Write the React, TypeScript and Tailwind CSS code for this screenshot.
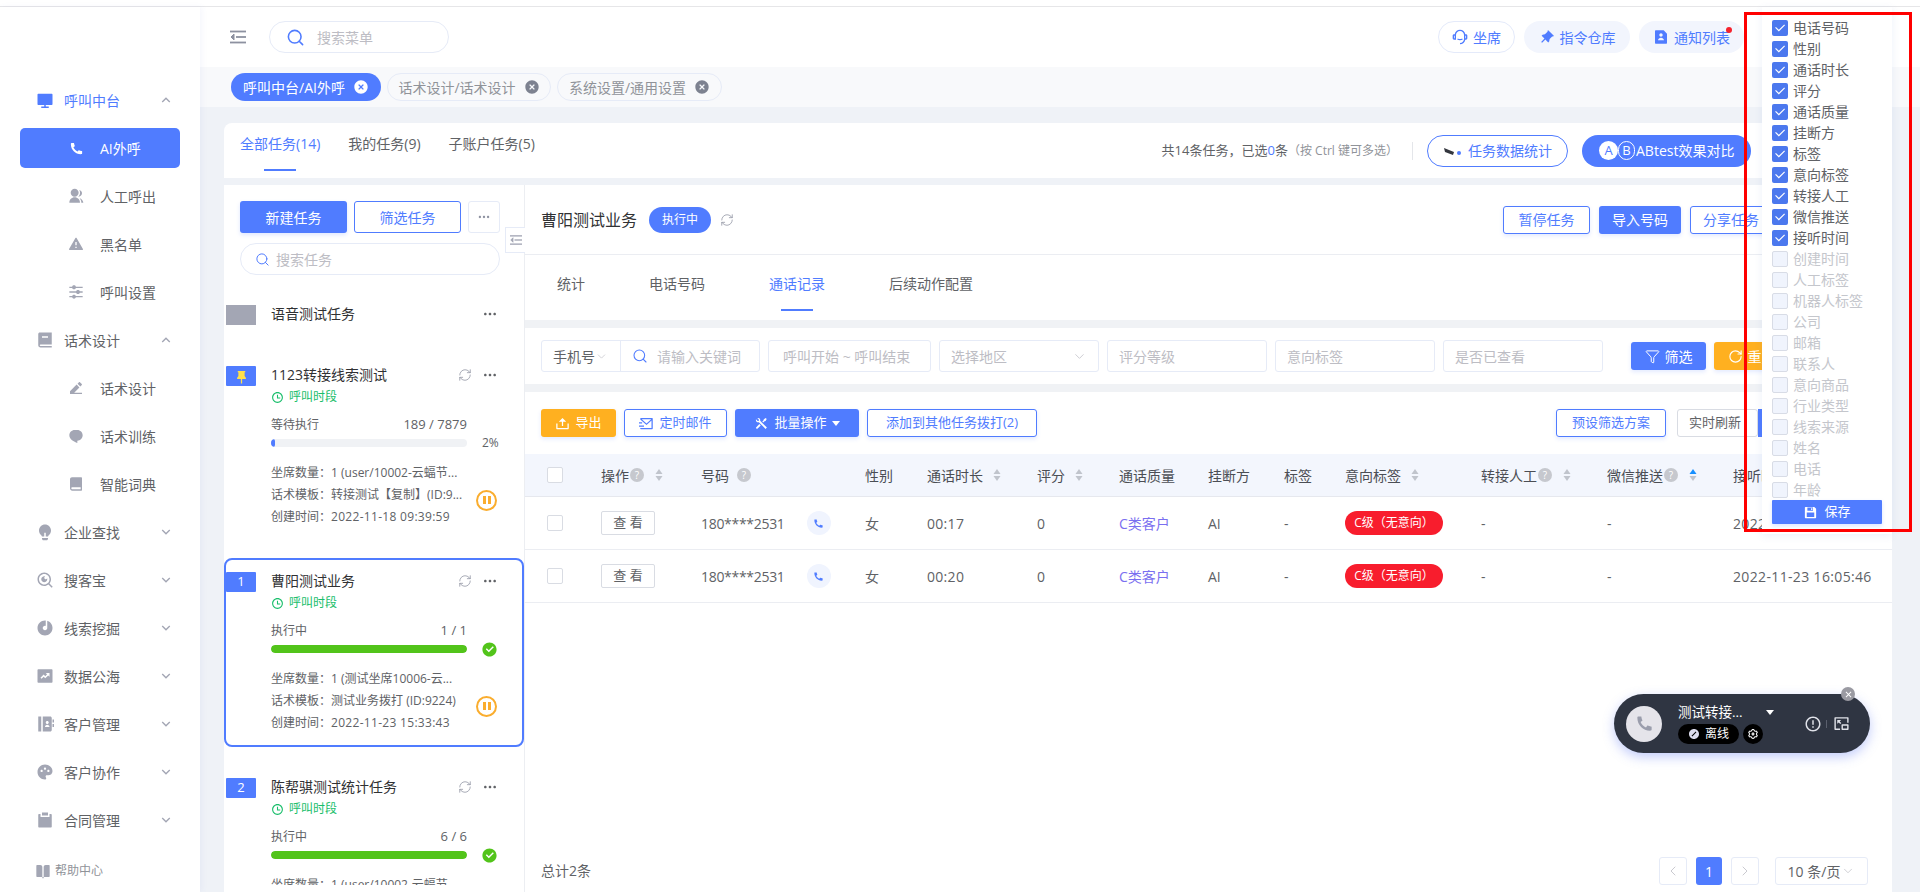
import React from "react";
import {
  RiComputerFill, RiPhoneFill, RiGroupFill, RiAlertFill, RiEqualizerFill, RiBook2Fill, RiEdit2Fill,
  RiChat1Fill, RiBookFill, RiLightbulbFill, RiSearchEyeLine, RiDiscFill, RiFundsBoxFill, RiContactsBookFill,
  RiPaletteFill, RiClipboardFill, RiBookOpenFill, RiArrowUpSLine, RiArrowDownSLine, RiCloseCircleFill,
  RiCustomerService2Line, RiPushpin2Fill, RiFileUserFill, RiMoreFill, RiTimeLine, RiCheckLine,
  RiUpload2Line, RiMailSendLine, RiToolsFill, RiSave3Fill, RiForbid2Fill, RiErrorWarningLine,
  RiPictureInPictureExitLine, RiCloseLine, RiPushpinFill, RiSettings3Line, RiCheckboxCircleFill,
} from "react-icons/ri";
import { Search, RefreshCw, ChevronDown, ChevronLeft, ChevronRight, Filter, RotateCw } from "lucide-react";

const COLON = "\uFF1A";
const COMMA = "\uFF0C";
const LP = "\uFF08";
const RP = "\uFF09";

function CollapseIcon({ className, size }: { className: string; size: number }) {
  return (
    <svg width={size} height={size} viewBox="0 0 16 16" className={className} fill="none" stroke="currentColor" strokeWidth="1.8">
      <path d="M0 2.5 H16" />
      <path d="M6 8 H16" />
      <path d="M0 13.5 H16" />
      <path d="M4 5 L1 8 L4 11 Z" fill="currentColor" strokeWidth="1" />
    </svg>
  );
}

function NavRow({ icon, label, open }: { icon: React.ReactNode; label: string; open?: boolean }) {
  return (
    <div className="h-12 flex items-center pl-[36px] pr-[26px] text-[14px] text-[#606266]">
      <span className="w-[18px] flex justify-center text-[#a3a6b4] text-[20px]">{icon}</span>
      <span className="ml-[10px] flex-1">{label}</span>
      {open ? <RiArrowUpSLine className="text-[#a3a6b4] text-[16px]" /> : <RiArrowDownSLine className="text-[#a3a6b4] text-[16px]" />}
    </div>
  );
}

function SubRow({ icon, label }: { icon: React.ReactNode; label: string }) {
  return (
    <div className="h-12 flex items-center pl-[68px] text-[14px] text-[#606266]">
      <span className="w-[16px] flex justify-center text-[#a3a6b4] text-[16px]">{icon}</span>
      <span className="ml-[16px]">{label}</span>
    </div>
  );
}

function Sidebar() {
  return (
    <aside className="w-[200px] shrink-0 bg-white pt-[69px] flex flex-col shadow-[2px_0_6px_rgba(80,110,200,0.06)] z-10">
      <div className="h-12 flex items-center pl-[36px] pr-[26px] text-[14px] text-[#507cff]">
        <span className="w-[18px] flex justify-center text-[21px]"><RiComputerFill /></span>
        <span className="ml-[10px] flex-1">呼叫中台</span>
        <RiArrowUpSLine className="text-[#a3a6b4] text-[16px]" />
      </div>
      <div className="h-12 flex items-center">
        <div className="mx-[20px] w-[160px] h-10 rounded-[5px] bg-[#507cff] text-white flex items-center pl-[49px] text-[14px]">
          <RiPhoneFill className="text-[15px]" />
          <span className="ml-[16px]">AI外呼</span>
        </div>
      </div>
      <SubRow icon={<RiGroupFill />} label="人工呼出" />
      <SubRow icon={<RiAlertFill />} label="黑名单" />
      <SubRow icon={<RiEqualizerFill />} label="呼叫设置" />
      <NavRow icon={<RiBook2Fill />} label="话术设计" open />
      <SubRow icon={<RiEdit2Fill />} label="话术设计" />
      <SubRow icon={<RiChat1Fill />} label="话术训练" />
      <SubRow icon={<RiBookFill />} label="智能词典" />
      <NavRow icon={<RiLightbulbFill />} label="企业查找" />
      <NavRow icon={<RiSearchEyeLine />} label="搜客宝" />
      <NavRow icon={<RiDiscFill />} label="线索挖掘" />
      <NavRow icon={<RiFundsBoxFill />} label="数据公海" />
      <NavRow icon={<RiContactsBookFill />} label="客户管理" />
      <NavRow icon={<RiPaletteFill />} label="客户协作" />
      <NavRow icon={<RiClipboardFill />} label="合同管理" />
      <div className="mt-[18px] flex items-center pl-[35px] text-[12px] text-[#909399]">
        <RiBookOpenFill className="text-[#a3a6b4] text-[16px]" />
        <span className="ml-[4px]">帮助中心</span>
      </div>
    </aside>
  );
}

function HeaderPill({ icon, label, outlined, dot, w }: { icon: React.ReactNode; label: string; outlined?: boolean; dot?: boolean; w: string }) {
  return (
    <div className={`relative h-8 rounded-full flex items-center justify-center gap-[5px] text-[14px] text-[#507cff] ${w} ${outlined ? "border border-[#e4eafa] bg-white" : "bg-[#f2f5fd]"}`}>
      <span className="text-[16px]">{icon}</span>
      <span>{label}</span>
      {dot && <span className="absolute right-[12px] top-[6px] w-[6px] h-[6px] rounded-full bg-[#f5222d]" />}
    </div>
  );
}

function Header() {
  return (
    <header className="h-[60px] bg-white flex items-center pl-[30px] pr-[176px] shrink-0">
      <CollapseIcon size={16} className="text-[#8d91a0]" />
      <div className="ml-[23px] w-[180px] h-8 rounded-full border border-[#e6ebf7] flex items-center pl-[16px] text-[14px] text-[#bdbdc4]">
        <Search className="w-[19px] h-[19px] text-[#507cff]" strokeWidth={2} />
        <span className="ml-[12px]">搜索菜单</span>
      </div>
      <div className="ml-auto flex gap-[9px]">
        <HeaderPill outlined icon={<RiCustomerService2Line />} label="坐席" w="w-[77px]" />
        <HeaderPill icon={<RiPushpinFill />} label="指令仓库" w="w-[106px]" />
        <HeaderPill dot icon={<RiFileUserFill />} label="通知列表" w="w-[105px]" />
      </div>
    </header>
  );
}

function ChipTab({ label, active, w }: { label: string; active?: boolean; w: string }) {
  return (
    <div className={`h-7 rounded-full flex items-center justify-center gap-[8px] text-[14px] ${w} ${active ? "bg-[#507cff] text-white" : "border border-[#e6ebf7] text-[#909399]"}`}>
      <span>{label}</span>
      <RiCloseCircleFill className={`text-[16px] ${active ? "text-white" : "text-[#7d8290]"}`} />
    </div>
  );
}

function SmallBtn({ children, kind, w, h = "h-7" }: { children: React.ReactNode; kind: "fill" | "line" | "orange"; w: string; h?: string }) {
  const k = kind === "fill" ? "bg-[#507cff] text-white" : kind === "orange" ? "bg-[#ffb020] text-white" : "bg-white border border-[#507cff] text-[#507cff]";
  return (
    <div className={`${h} ${w} shrink-0 rounded-[3px] text-[13px] flex items-center justify-center gap-[5px] shadow-[0_2px_4px_rgba(80,124,255,0.16)] ${k}`}>
      {children}
    </div>
  );
}

type Task = { badge: React.ReactNode; title: string; status: string; count: string; pct: number; seats: string; tpl: string; time: string; selected?: boolean; pctLabel?: string };

function TaskCard({ t }: { t: Task }) {
  const done = t.pct === 100;
  return (
    <div className={`h-[189px] mb-[17px] shrink-0 border-2 rounded-[8px] pt-[12px] flex ${t.selected ? "border-[#507cff]" : "border-transparent"}`}>
      <div className="w-[30px] h-5 rounded-[1px] bg-[#507cff] text-white text-[13px] flex items-center justify-center shrink-0">{t.badge}</div>
      <div className="ml-[15px] flex-1 text-[#606266]">
        <div className="h-[18px] w-[227px] flex items-center justify-between text-[14px] leading-[18px] text-[#303133]">
          <span>{t.title}</span>
          <span className="flex items-center gap-[10px] text-[#8d91a0]">
            <RefreshCw className="w-[14px] h-[14px]" strokeWidth={1.3} />
            <RiMoreFill className="text-[16px] text-[#606266]" />
          </span>
        </div>
        <div className="mt-[2px] h-[22px] flex items-center text-[12px] text-[#19be6b]">
          <RiTimeLine className="text-[13px]" />
          <span className="ml-[5px]">呼叫时段</span>
        </div>
        <div className="mt-[7px] h-5 w-[196px] flex items-center justify-between text-[12px]">
          <span>{t.status}</span>
          <span className="text-[13px]">{t.count}</span>
        </div>
        <div className="mt-[4px] h-2 flex items-center">
          <div className="w-[196px] h-2 rounded-full bg-[#f0f2f5] overflow-hidden">
            <div className={`h-full rounded-full ${done ? "bg-[#52c41a]" : "bg-[#507cff]"}`} style={{ width: `${t.pct}%` }} />
          </div>
          {done ? (
            <RiCheckboxCircleFill className="ml-[14px] text-[#52c41a] text-[17px]" />
          ) : (
            <span className="ml-[15px] text-[12px]">{t.pctLabel}</span>
          )}
        </div>
        <div className="mt-[15px] flex items-center text-[12px]">
          <div className="w-[205px] shrink-0">
            <div className="h-[22px] leading-[22px] whitespace-nowrap">坐席数量{COLON}{t.seats}</div>
            <div className="h-[22px] leading-[22px] whitespace-nowrap">话术模板{COLON}{t.tpl}</div>
            <div className="h-[22px] leading-[22px] whitespace-nowrap">创建时间{COLON}<span className="tracking-[0.3px]">{t.time}</span></div>
          </div>
          <div className="mt-[10px] w-[21px] h-[21px] rounded-full border-2 border-[#faad2e] flex items-center justify-center gap-[2px] shrink-0">
            <span className="w-[3px] h-[8px] bg-[#faad2e]" />
            <span className="w-[3px] h-[8px] bg-[#faad2e]" />
          </div>
        </div>
      </div>
    </div>
  );
}

const tasks: Task[] = [
  { badge: <RiPushpin2Fill className="text-[#ffe04a] text-[15px]" />, title: "1123转接线索测试", status: "等待执行", count: "189 / 7879", pct: 2, pctLabel: "2%", seats: "1 (user/10002-云蝠节...", tpl: "转接测试【复制】(ID:9...", time: "2022-11-18 09:39:59" },
  { badge: "1", title: "曹阳测试业务", status: "执行中", count: "1 / 1", pct: 100, seats: "1 (测试坐席10006-云...", tpl: "测试业务拨打 (ID:9224)", time: "2022-11-23 15:33:43", selected: true },
  { badge: "2", title: "陈帮骐测试统计任务", status: "执行中", count: "6 / 6", pct: 100, seats: "1 (user/10002-云蝠节...", tpl: "测试业务拨打 (ID:9224)", time: "2022-11-23 15:33:43" },
];

function TaskPanel() {
  return (
    <section className="w-[301px] shrink-0 border-r border-[#eceef2] flex flex-col pt-[16px]">
      <div className="px-[16px] flex gap-[7px]">
        <div className="w-[107px] h-8 rounded-[3px] bg-[#507cff] text-white text-[14px] flex items-center justify-center shadow-[0_2px_4px_rgba(80,124,255,0.18)]">新建任务</div>
        <div className="w-[107px] h-8 rounded-[3px] bg-white border border-[#507cff] text-[#507cff] text-[14px] flex items-center justify-center">筛选任务</div>
        <div className="w-8 h-8 rounded-[3px] border border-[#e6ebf7] text-[#8d91a0] flex items-center justify-center"><RiMoreFill className="text-[14px]" /></div>
      </div>
      <div className="ml-[16px] mt-[10px] w-[260px] h-8 rounded-full border border-[#e6ebf7] flex items-center pl-[14px] text-[14px] text-[#bdbdc4]">
        <Search className="w-[15px] h-[15px] text-[#507cff]" strokeWidth={1.6} />
        <span className="ml-[6px]">搜索任务</span>
      </div>
      <div className="mt-[16px] h-[594px] overflow-hidden">
        <div className="h-[44px] mb-[17px] border-2 border-transparent pt-[12px] flex">
          <div className="w-[30px] h-5 bg-[#a3a6b4] shrink-0" />
          <div className="ml-[15px] w-[227px] h-[18px] flex items-center justify-between text-[14px] leading-[18px] text-[#303133]">
            <span>语音测试任务</span>
            <RiMoreFill className="text-[16px] text-[#606266]" />
          </div>
        </div>
        {tasks.map((t) => <TaskCard key={t.title} t={t} />)}
      </div>
    </section>
  );
}

function Field({ label, w, arrow }: { label: string; w: string; arrow?: boolean }) {
  return (
    <div className={`${w} h-8 shrink-0 rounded-[3px] border border-[#e6ebf7] flex items-center justify-between px-[11px] text-[14px] text-[#bdbdc4]`}>
      <span>{label}</span>
      {arrow && <ChevronDown className="w-[15px] h-[15px]" strokeWidth={1.2} />}
    </div>
  );
}

function Help() {
  return <span className="block w-[14px] h-[14px] rounded-full bg-[#c6c8ce] text-white text-[10px] leading-[14px] text-center shrink-0">?</span>;
}

function Sort({ on }: { on?: boolean }) {
  return (
    <svg width="8" height="14" viewBox="0 0 8 14" className="shrink-0">
      <path d="M4 1 L7.5 6 L.5 6 Z" fill={on ? "#1890ff" : "#c0c4cc"} />
      <path d="M4 13 L7.5 8 L.5 8 Z" fill="#c0c4cc" />
    </svg>
  );
}

const tableCols = "grid grid-cols-[76px_100px_164px_62px_110px_82px_89px_76px_61px_136px_126px_126px_1fr] items-center";

function CheckCell() {
  return <div className="ml-[22px] w-4 h-4 rounded-[2px] border border-[#d9dce3] bg-white" />;
}

function HeadCell({ label, help, sort, on }: { label: string; help?: boolean; sort?: boolean; on?: boolean }) {
  return (
    <div className="flex items-center">
      <span className="whitespace-nowrap">{label}</span>
      {help && <span className="ml-[1px]"><Help /></span>}
      {sort && <span className={`${help ? "ml-[11px]" : "ml-[10px]"} flex`}><Sort on={on} /></span>}
    </div>
  );
}

function Row({ dur, time }: { dur: string; time: string }) {
  return (
    <div className={`${tableCols} h-[53px] border-b border-[#ebedf2] text-[14px] text-[#606266]`}>
      <CheckCell />
      <div className="w-[54px] h-6 rounded-[2px] border border-[#d9dce3] text-[13px] flex items-center justify-center">查 看</div>
      <div className="flex items-center">
        <span className="tracking-[-0.3px]">180****2531</span>
        <span className="ml-[22px] w-6 h-6 rounded-full bg-[#f0f4fe] text-[#507cff] flex items-center justify-center"><RiPhoneFill className="text-[11px]" /></span>
      </div>
      <div>女</div>
      <div className="tracking-[0.3px]">{dur}</div>
      <div>0</div>
      <div className="text-[#7a6ff0]">C类客户</div>
      <div>AI</div>
      <div>-</div>
      <div className="w-[98px] h-6 rounded-full bg-[#f81d2d] text-white text-[12px] flex items-center justify-center whitespace-nowrap">C级{LP}无意向{RP}</div>
      <div>-</div>
      <div>-</div>
      <div className="whitespace-nowrap tracking-[0.35px]">{time}</div>
    </div>
  );
}

function DetailPanel() {
  return (
    <section className="relative flex-1 min-w-0 flex flex-col">
      <div className="absolute -left-[20px] top-[42px] w-[20px] h-[26px] bg-white border border-r-0 border-[#e6ebf7] flex items-center justify-center">
        <CollapseIcon size={12} className="text-[#a3a6b4]" />
      </div>
      <div className="h-[70px] shrink-0 border-b border-[#ebedf2] flex items-center px-[16px]">
        <span className="text-[16px] text-[#303133]">曹阳测试业务</span>
        <span className="ml-[12px] w-[62px] h-[26px] rounded-full bg-[#507cff] text-white text-[12px] flex items-center justify-center">执行中</span>
        <RefreshCw className="ml-[9px] w-[14px] h-[14px] text-[#8d91a0]" strokeWidth={1.3} />
        <div className="ml-[769px] flex gap-[9px]">
          <SmallBtn kind="line" w="w-[87px]"><span className="text-[14px]">暂停任务</span></SmallBtn>
          <SmallBtn kind="fill" w="w-[82px]"><span className="text-[14px]">导入号码</span></SmallBtn>
          <SmallBtn kind="line" w="w-[82px]"><span className="text-[14px]">分享任务</span></SmallBtn>
        </div>
      </div>
      <div className="h-[65px] shrink-0 flex gap-16 pl-[32px] text-[14px] text-[#606266]">
        <div className="pt-[18px]">统计</div>
        <div className="pt-[18px]">电话号码</div>
        <div className="pt-[18px] text-[#507cff] flex flex-col items-center">
          <span>通话记录</span>
          <span className="mt-[15px] w-[32px] h-[2px] bg-[#507cff]" />
        </div>
        <div className="pt-[18px]">后续动作配置</div>
      </div>
      <div className="h-[8px] shrink-0 bg-[#f0f2f5]" />
      <div className="h-[56px] shrink-0 flex items-center pl-[16px] gap-[8px]">
        <div className="w-[219px] h-8 shrink-0 rounded-[3px] border border-[#e6ebf7] flex items-center text-[14px]">
          <div className="w-[79px] h-full border-r border-[#e6ebf7] flex items-center pl-[11px] text-[#606266]">
            <span>手机号</span>
            <ChevronDown className="w-[13px] h-[13px] text-[#bdbdc4]" strokeWidth={1.2} />
          </div>
          <Search className="ml-[11px] w-[16px] h-[16px] text-[#507cff]" strokeWidth={1.6} />
          <span className="ml-[9px] text-[#bdbdc4] whitespace-nowrap">请输入关键词</span>
        </div>
        <div className="w-[163px] h-8 shrink-0 rounded-[3px] border border-[#e6ebf7] flex items-center pl-[14px] text-[14px] text-[#bdbdc4] whitespace-nowrap">呼叫开始 ~ 呼叫结束</div>
        <Field label="选择地区" w="w-[160px]" arrow />
        <Field label="评分等级" w="w-[160px]" />
        <Field label="意向标签" w="w-[160px]" />
        <Field label="是否已查看" w="w-[160px]" />
        <div className="ml-[20px] flex gap-[8px]">
          <SmallBtn kind="fill" w="w-[75px]"><Filter className="w-[15px] h-[15px]" strokeWidth={1.6} /><span className="text-[14px]">筛选</span></SmallBtn>
          <SmallBtn kind="orange" w="w-[75px]"><RotateCw className="w-[15px] h-[15px]" strokeWidth={1.8} /><span className="text-[14px]">重置</span></SmallBtn>
        </div>
      </div>
      <div className="h-[8px] shrink-0 bg-[#f0f2f5]" />
      <div className="h-[62px] shrink-0 flex items-start pt-[17px] pl-[16px] gap-[8px]">
        <SmallBtn kind="orange" w="w-[75px]"><RiUpload2Line className="text-[15px]" /><span>导出</span></SmallBtn>
        <SmallBtn kind="line" w="w-[103px]"><RiMailSendLine className="text-[15px]" /><span>定时邮件</span></SmallBtn>
        <SmallBtn kind="fill" w="w-[124px]"><RiToolsFill className="text-[15px]" /><span>批量操作</span><span className="w-0 h-0 border-x-[4px] border-x-transparent border-t-[5px] border-t-white" /></SmallBtn>
        <SmallBtn kind="line" w="w-[170px]"><span>添加到其他任务拨打(2)</span></SmallBtn>
        <div className="ml-[511px] flex items-start">
          <SmallBtn kind="line" w="w-[110px]"><span>预设筛选方案</span></SmallBtn>
          <div className="ml-[11px] w-[81px] h-7 rounded-[3px] border border-[#d9dce3] text-[13px] text-[#606266] flex items-center pl-[11px] whitespace-nowrap">实时刷新</div>
          <div className="w-[5px] h-7 bg-[#507cff]" />
        </div>
      </div>
      <div className={`${tableCols} h-[43px] shrink-0 bg-[#f3f6fd] border-b border-[#e6e8ee] text-[14px] text-[#4b4e55]`}>
        <CheckCell />
        <HeadCell label="操作" help sort />
        <div className="flex items-center gap-[8px]"><span>号码</span><Help /></div>
        <div>性别</div>
        <HeadCell label="通话时长" sort />
        <div className="flex items-center gap-[10px]"><span>评分</span><Sort /></div>
        <div>通话质量</div>
        <div>挂断方</div>
        <div>标签</div>
        <HeadCell label="意向标签" sort />
        <HeadCell label="转接人工" help sort />
        <HeadCell label="微信推送" help sort on />
        <div>接听时间</div>
      </div>
      <Row dur="00:17" time="2022-11-23 16:06:12" />
      <Row dur="00:20" time="2022-11-23 16:05:46" />
      <div className="mt-auto h-[35px] shrink-0 flex items-start pl-[16px] pr-[24px] text-[14px] text-[#606266]">
        <span className="mt-[3px]">总计2条</span>
        <div className="ml-auto flex items-center">
          <span className="w-7 h-7 rounded-[3px] border border-[#e6ebf7] flex items-center justify-center text-[#bdbdc4]"><ChevronLeft className="w-[16px] h-[16px]" strokeWidth={1.2} /></span>
          <span className="ml-[9px] w-[26px] h-7 rounded-[3px] bg-[#507cff] text-white flex items-center justify-center">1</span>
          <span className="ml-[9px] w-7 h-7 rounded-[3px] border border-[#e6ebf7] flex items-center justify-center text-[#bdbdc4]"><ChevronRight className="w-[16px] h-[16px]" strokeWidth={1.2} /></span>
          <span className="ml-[16px] w-[93px] h-7 rounded-[3px] border border-[#e6ebf7] flex items-center justify-center gap-[1px]">10 条/页<ChevronDown className="w-[14px] h-[14px] text-[#bdbdc4]" strokeWidth={1.2} /></span>
        </div>
      </div>
    </section>
  );
}

const checked = ["电话号码", "性别", "通话时长", "评分", "通话质量", "挂断方", "标签", "意向标签", "转接人工", "微信推送", "接听时间"];
const unchecked = ["创建时间", "人工标签", "机器人标签", "公司", "邮箱", "联系人", "意向商品", "行业类型", "线索来源", "姓名", "电话", "年龄"];

function ColumnPopup() {
  return (
    <div className="absolute left-[1762px] top-[7px] w-[130px] h-[527px] bg-white shadow-[0_2px_8px_rgba(80,110,200,0.1)] pt-[10px] px-[10px] z-20">
      {checked.map((c) => (
        <div key={c} className="h-[21px] flex items-center text-[14px] text-[#606266]">
          <span className="w-4 h-4 rounded-[2px] bg-[#4b78ee] flex items-center justify-center shrink-0"><RiCheckLine className="text-white text-[14px]" /></span>
          <span className="ml-[5px] whitespace-nowrap">{c}</span>
        </div>
      ))}
      {unchecked.map((c) => (
        <div key={c} className="h-[21px] flex items-center text-[14px] text-[#c4c6cc]">
          <span className="w-4 h-4 rounded-[2px] bg-[#f0f4fd] border border-[#d8dce6] shrink-0" />
          <span className="ml-[5px] whitespace-nowrap">{c}</span>
        </div>
      ))}
      <div className="w-[110px] h-6 rounded-[1px] bg-[#507cff] text-white text-[13px] flex items-center justify-center gap-[6px] shadow-[0_2px_4px_rgba(80,124,255,0.2)]">
        <RiSave3Fill className="text-[15px]" />
        <span>保存</span>
      </div>
    </div>
  );
}

function PhoneWidget() {
  return (
    <div className="absolute left-[1614px] top-[694px] w-[256px] h-[59px] rounded-full bg-[#2f3542] shadow-[0_4px_12px_rgba(80,110,240,0.35)] flex items-center pl-[12px] z-20">
      <span className="w-9 h-9 rounded-full bg-[#e5e4ea] flex items-center justify-center text-[#9a9dac]"><RiPhoneFill className="text-[19px]" /></span>
      <div className="ml-[16px] w-[112px]">
        <div className="flex items-center justify-between pr-[16px] text-[13.5px] leading-[18px] text-white whitespace-nowrap">
          <span>测试转接...</span>
          <span className="w-0 h-0 border-x-[4px] border-x-transparent border-t-[5px] border-t-white" />
        </div>
        <div className="mt-[3px] flex gap-[4px]">
          <span className="w-[61px] h-5 rounded-full bg-black text-white text-[12px] flex items-center justify-center gap-[5px]"><RiForbid2Fill className="text-[12px] text-[#dde]" />离线</span>
          <span className="w-5 h-5 rounded-full bg-black text-white flex items-center justify-center"><RiSettings3Line className="text-[12px]" /></span>
        </div>
      </div>
      <RiErrorWarningLine className="ml-[14px] text-[#dfe1e8] text-[18px]" />
      <span className="ml-[4px] w-px h-2 bg-[#5a5f6d]" />
      <RiPictureInPictureExitLine className="ml-[6px] text-[#dfe1e8] text-[17px]" />
      <span className="absolute right-[15px] -top-[7px] w-[14px] h-[14px] rounded-full bg-[#9a9aa2] flex items-center justify-center text-white"><RiCloseLine className="text-[11px]" /></span>
    </div>
  );
}

export default function App() {
  return (
    <div className="relative w-[1920px] h-[892px] overflow-hidden bg-white font-['Open_Sans','Noto_Sans_CJK_SC',sans-serif]">
      <div className="h-[7px] border-b border-[#e6e6e8]" />
      <div className="flex h-[885px]">
        <Sidebar />
        <main className="flex-1 min-w-0 flex flex-col bg-[#eff2f7]">
          <Header />
          <div className="h-10 shrink-0 bg-[#f8f9fb] flex items-center pl-[31px] gap-[6px]">
            <ChipTab active label="呼叫中台/AI外呼" w="w-[150px]" />
            <ChipTab label="话术设计/话术设计" w="w-[164px]" />
            <ChipTab label="系统设置/通用设置" w="w-[165px]" />
          </div>
          <div className="flex-1 min-h-0 pl-[24px] pr-[28px] pt-[16px] flex flex-col">
            <div className="h-[55px] shrink-0 bg-white rounded-t-[8px] flex items-start pl-[16px] pr-[141px]">
              <div className="flex gap-[28px] text-[14px] text-[#606266] pt-[10px]">
                <div className="text-[#507cff] flex flex-col items-center"><span>全部任务(14)</span><span className="mt-[15px] w-[32px] h-[2px] bg-[#507cff]" /></div>
                <span>我的任务(9)</span>
                <span>子账户任务(5)</span>
              </div>
              <div className="ml-auto h-[55px] flex items-center">
                <span className="text-[13px] text-[#606266] whitespace-nowrap">共14条任务{COMMA}已选<span className="text-[#507cff]">0</span>条</span>
                <span className="text-[12px] text-[#909399] whitespace-nowrap">{LP}按 Ctrl 键可多选{RP}</span>
                <span className="ml-[14px] w-px h-[18px] bg-[#e4e6ea]" />
                <div className="ml-[14px] w-[141px] h-8 rounded-full border border-[#507cff] text-[#507cff] text-[14px] flex items-center justify-center gap-[6px]">
                  <svg width="19" height="12" viewBox="0 0 19 12"><path d="M1 3 L11 7 L10 10 L2 7 Z" fill="#33363d" /><circle cx="16" cy="8" r="2" fill="#507cff" /></svg>
                  <span>任务数据统计</span>
                </div>
                <div className="ml-[14px] w-[169px] h-8 rounded-full bg-[#507cff] text-white text-[14px] flex items-center pl-[17px]">
                  <span className="w-[19px] h-[19px] rounded-full bg-white text-[#507cff] text-[13px] flex items-center justify-center">A</span>
                  <span className="w-[17px] h-[19px] rounded-full border border-white text-[13px] flex items-center justify-center">B</span>
                  <span className="ml-[1px]">ABtest效果对比</span>
                </div>
              </div>
            </div>
            <div className="h-[7px] shrink-0" />
            <div className="flex-1 min-h-0 bg-white flex">
              <TaskPanel />
              <DetailPanel />
            </div>
          </div>
        </main>
      </div>
      <ColumnPopup />
      <div className="absolute left-[1744px] top-[12px] w-[168px] h-[520px] border-[3px] border-[#ff0000] z-30 pointer-events-none" />
      <PhoneWidget />
    </div>
  );
}
